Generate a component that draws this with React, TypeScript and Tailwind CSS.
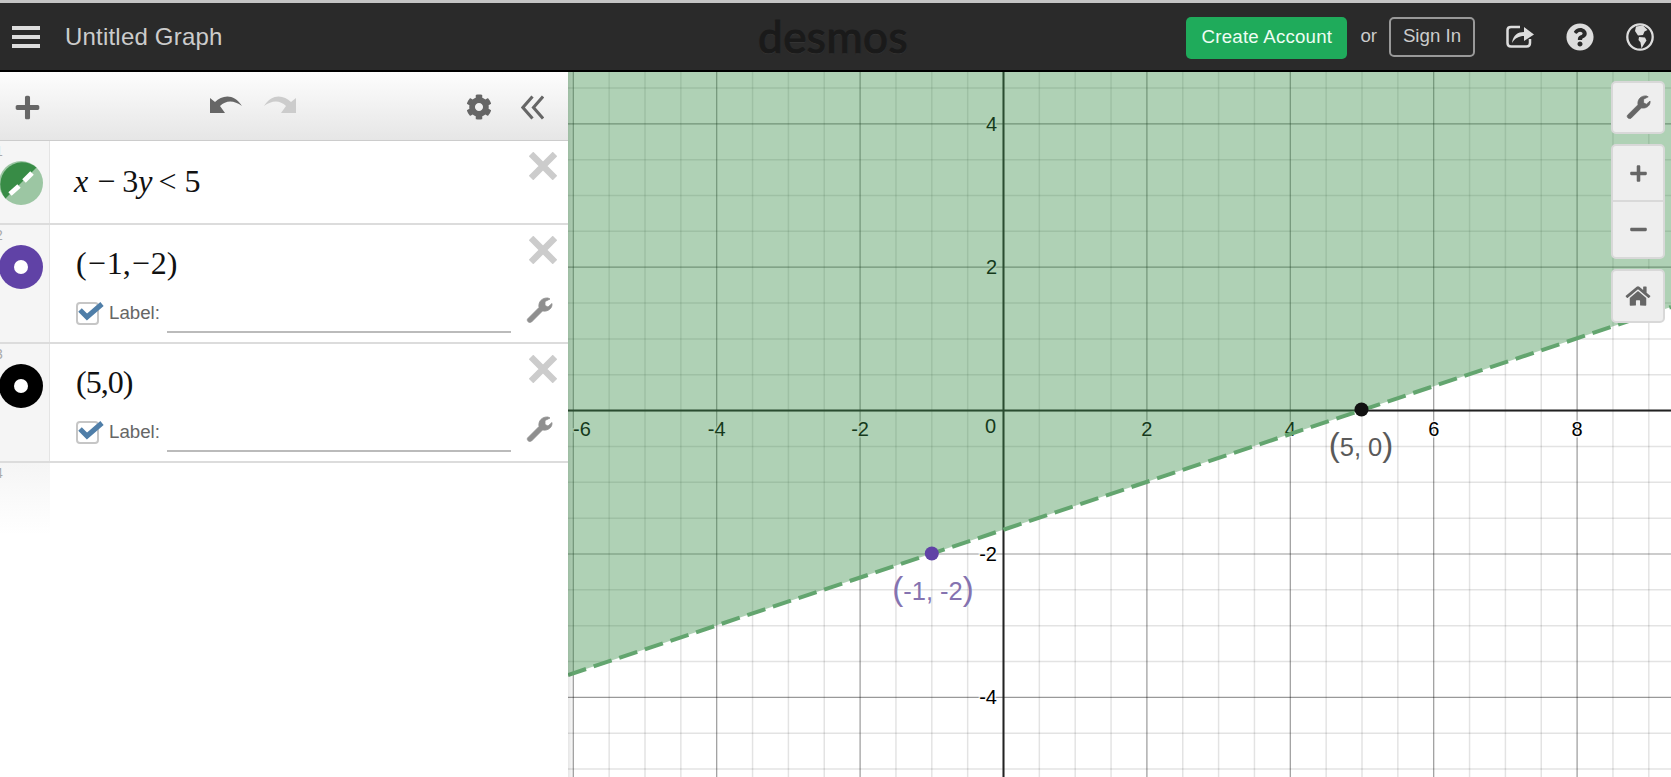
import { FaCog, FaHome, FaMinus, FaPlus, FaQuestionCircle } from "react-icons/fa";

const UNIT = 71.7;
const ORIGIN_X = 1003.5;
const ORIGIN_Y = 410.6;

const toX = (v: number) => ORIGIN_X + v * UNIT;
const toY = (v: number) => ORIGIN_Y - v * UNIT;

const steps: number[] = [];
for (let i = -14; i <= 20; i++) steps.push(i / 2);

const xLabels = [-6, -4, -2, 2, 4, 6, 8];
const yLabels = [4, 2, -2, -4];

function Graph() {
  return (
    <svg viewBox="568 72 1103 705" className="absolute inset-0 w-full h-full">
      {steps.map((v) => (
        <g key={v} stroke="#000" strokeOpacity={v % 2 === 0 ? 0.4 : 0.11} strokeWidth={v % 2 === 0 ? 1.2 : 1.5}>
          <line x1={toX(v)} x2={toX(v)} y1={72} y2={777} />
          <line x1={568} x2={1671} y1={toY(v)} y2={toY(v)} />
        </g>
      ))}
      <line x1={ORIGIN_X} x2={ORIGIN_X} y1={72} y2={777} stroke="#222" strokeWidth={2} />
      <line x1={568} x2={1671} y1={ORIGIN_Y} y2={ORIGIN_Y} stroke="#222" strokeWidth={2} />

      <g fontSize={20} fill="#000" stroke="#fff" strokeWidth={3} strokeOpacity={0.7} style={{ paintOrder: "stroke" }}>
        {xLabels.map((v) => (
          <text key={v} x={v === -6 ? 582 : toX(v)} y={436} textAnchor="middle">
            {v}
          </text>
        ))}
        {yLabels.map((v) => (
          <text key={v} x={997} y={toY(v) + 7} textAnchor="end">
            {v}
          </text>
        ))}
        <text x={996} y={433} textAnchor="end">
          0
        </text>
      </g>

      <polygon points="568,72 1671,72 1671,307 568,675" fill="#388c46" fillOpacity={0.4} />
      <line x1={568} y1={675} x2={1671} y2={307} stroke="#63a56f" strokeWidth={4} strokeDasharray="19 8" />

      <circle cx={931.8} cy={553.5} r={7} fill="#6042a6" />
      <circle cx={1361.5} cy={409.5} r={7} fill="#111" />
      <text x={933} y={600} textAnchor="middle" fontSize={25.5} fill="#8573b0">
        <tspan fontSize={33}>(</tspan>-1, -2<tspan fontSize={33}>)</tspan>
      </text>
      <text x={1361} y={456} textAnchor="middle" fontSize={25.5} fill="#5a5a5a">
        <tspan fontSize={33}>(</tspan>5, 0<tspan fontSize={33}>)</tspan>
      </text>
    </svg>
  );
}

function UndoIcon({ className }: { className?: string }) {
  return (
    <svg viewBox="0 0 32 18" className={className} fill="currentColor">
      <path d="M0 18V3l5 4C12 0 24-2 32 11 24 5 16 5 10 11l5 7Z" />
    </svg>
  );
}

function HideIcon() {
  return (
    <svg viewBox="0 0 24 25" className="w-[23px] h-[25px]" fill="none" stroke="#666" strokeWidth={3.2}>
      <path d="M12 1 2 12.5 12 24M23 1 13 12.5 23 24" />
    </svg>
  );
}

function WrenchIcon({ className }: { className?: string }) {
  return (
    <svg viewBox="0 0 27 27" className={className} fill="currentColor" stroke="currentColor" strokeWidth={0.8}>
      <path
        fillRule="evenodd"
        d="M1.5 22 13 10.5C12 5 16 .5 22 1l2 1-5 2.5v4l3 1.5 4-3.5c.5 4.500-3.500 8.500-9.500 7.500L5.500 25c-2.500 1.500-5-1-4-3Z"
      />
    </svg>
  );
}

function CloseIcon() {
  return (
    <svg viewBox="0 0 28 28" className="w-[28px] h-[28px]" fill="none" stroke="#ccc" strokeWidth={6.5}>
      <path d="M2 2 26 26M26 2 2 26" />
    </svg>
  );
}

function ShareIcon() {
  return (
    <svg viewBox="0 0 28 23" className="w-[28px] h-[23px] ml-[31px]" fill="none" stroke="#ddd" strokeWidth={2.5}>
      <path d="M14 2H5Q1.500 2 1.500 5V18Q1.500 21.500 5 21.500H20.500Q24 21.500 24 18V14" />
      <path d="M6 18C7 10 12 7 18 7V2L28 9.500 18 16V11C13 11 9 13 6 18Z" fill="#ddd" stroke="none" />
    </svg>
  );
}

function GlobeIcon() {
  return (
    <svg viewBox="0 0 28 28" className="w-[28px] h-[28px] ml-[32px]" fill="#ddd">
      <circle cx="14" cy="14" r="12.700" fill="none" stroke="#ddd" strokeWidth={2.300} />
      <path d="M10 3.500 17 2.500 21.500 7 18.500 8.500 17 12 12 12.500 9 8Z" />
      <path d="M13 14 19 14.500 20.500 17.500 17.500 22 15.500 25.500 14.500 19.500 12.500 17Z" />
    </svg>
  );
}

function ShadeIcon() {
  return (
    <svg viewBox="0 0 44 44" className="w-[44px] h-[44px] -ml-[1px] mt-[20px] shrink-0">
      <circle cx="22" cy="22" r="22" fill="#9cc6a3" />
      <path d="M6.500 37.500A22 22 0 0 1 37.500 6.500Z" fill="#388c46" />
      <path d="M11 33 20 25M25 20 33 12" stroke="#fff" strokeWidth={5} />
    </svg>
  );
}

function PointIcon({ color }: { color: string }) {
  return (
    <div
      className="w-[44px] h-[44px] -ml-[1px] mt-[20px] shrink-0 rounded-full flex items-center justify-center"
      style={{ backgroundColor: color }}
    >
      <div className="w-[14px] h-[14px] rounded-full bg-white" />
    </div>
  );
}

function Gutter({ n, children }: { n: number; children?: React.ReactNode }) {
  return (
    <div className="relative w-[50px] shrink-0 bg-[#f5f5f5] border-r border-[#e4e4e4] overflow-hidden">
      <span className="absolute -left-[5px] top-[2px] text-[14px] leading-[16px] text-[#aaa]">{n}</span>
      {children}
    </div>
  );
}

function LabelRow() {
  return (
    <div className="flex items-center mt-[10px]">
      <div className="relative w-[23px] h-[23px] rounded-[4px] border-2 border-[#c6c6c6] bg-white">
        <svg viewBox="0 0 28 20" className="absolute -left-[2px] -top-[2px] w-[28px] h-[20px] overflow-visible" fill="none" stroke="#4f7ea8" strokeWidth={5}>
          <path d="M4 8 11 15 26 2" />
        </svg>
      </div>
      <span className="ml-[10px] w-[58px] text-[18.7px] text-[#666]">Label:</span>
      <input className="w-[344px] h-[40px] border-b-2 border-[#bbb] outline-none bg-transparent" />
    </div>
  );
}

function RowActions({ wrench }: { wrench?: boolean }) {
  return (
    <div className="w-[28px] mr-[11px] mt-[11px] shrink-0 flex flex-col">
      <CloseIcon />
      {wrench && <WrenchIcon className="w-[27px] h-[27px] mt-[33px] -ml-[3px] text-[#8f8f8f]" />}
    </div>
  );
}

const mathFont = "font-['Liberation_Serif',serif] text-[32px] leading-[40px] text-[#111]";

function Minus() {
  return <span className="mx-[1px]">−</span>;
}

function ExpressionList() {
  return (
    <div className="w-[568px] shrink-0 flex flex-col bg-white relative z-10">
      <div className="h-[69px] border-b border-[#ccc] bg-gradient-to-b from-[#fdfdfd] to-[#e6e6e6] flex items-center text-[#666]">
        <FaPlus className="w-[27px] h-[27px] ml-[14px] mt-[2px]" />
        <UndoIcon className="w-[32px] h-[18px] ml-[169px] -mt-[4px]" />
        <UndoIcon className="w-[32px] h-[18px] ml-[22px] -mt-[4px] -scale-x-100 text-[#ccc]" />
        <FaCog className="w-[26px] h-[26px] ml-[170px] mt-[2px]" />
        <div className="ml-[29px] mt-[2px]">
          <HideIcon />
        </div>
      </div>

      <div className="h-[84px] flex border-b-2 border-[#dcdcdc]">
        <Gutter n={1}>
          <ShadeIcon />
        </Gutter>
        <div className={`flex-1 flex items-center pl-[24px] -mt-[2px] ${mathFont}`}>
          <i>x</i>
          <span className="ml-[9px] mr-[7px]">−</span>
          <span>3</span>
          <i>y</i>
          <span className="ml-[6px] mr-[8px]">&lt;</span>
          <span>5</span>
        </div>
        <RowActions />
      </div>

      <div className="h-[119px] flex border-b-2 border-[#dcdcdc]">
        <Gutter n={2}>
          <PointIcon color="#6042a6" />
        </Gutter>
        <div className="flex-1 pl-[26px] pt-[18px]">
          <div className={mathFont}>
            (<Minus />
            1,
            <Minus />
            2)
          </div>
          <LabelRow />
        </div>
        <RowActions wrench />
      </div>

      <div className="h-[119px] flex border-b-2 border-[#dcdcdc]">
        <Gutter n={3}>
          <PointIcon color="#000000" />
        </Gutter>
        <div className="flex-1 pl-[26px] pt-[18px]">
          <div className={`${mathFont} tracking-[-1px]`}>(5,0)</div>
          <LabelRow />
        </div>
        <RowActions wrench />
      </div>

      <div className="h-[72px] flex">
        <div className="relative w-[50px] bg-gradient-to-b from-[#f5f5f5] to-white overflow-hidden">
          <span className="absolute -left-[5px] top-[2px] text-[14px] leading-[16px] text-[#aaa]">4</span>
        </div>
      </div>
    </div>
  );
}

function GraphControls() {
  const box = "w-[54px] bg-[#eeeeee] border-2 border-[#d8d8d8] rounded-[5px] flex items-center justify-center text-[#666]";
  return (
    <div className="absolute top-[9px] right-[6px] flex flex-col gap-[10px]">
      <div className={`${box} h-[53px]`}>
        <WrenchIcon className="w-[25px] h-[25px]" />
      </div>
      <div className={`${box} h-[115px] flex-col`}>
        <div className="h-[56px] w-full flex items-center justify-center border-b-2 border-[#d9d9d9]">
          <FaPlus className="w-[19px] h-[19px]" />
        </div>
        <div className="flex-1 w-full flex items-center justify-center">
          <FaMinus className="w-[19px] h-[19px]" />
        </div>
      </div>
      <div className={`${box} h-[54px]`}>
        <FaHome className="w-[26px] h-[22px]" />
      </div>
    </div>
  );
}

export default function App() {
  return (
    <div className="h-[777px] w-full overflow-hidden flex flex-col font-['Liberation_Sans',Arial,sans-serif]">
      <div className="h-[3px] bg-[#c4c4c4]" />
      <div className="h-[69px] shrink-0 bg-[#2a2a2a] border-b-2 border-black flex items-center text-[#ccc]">
        <div className="w-[758px] flex items-center shrink-0">
          <div className="ml-[12px] w-[28px] flex flex-col gap-[5px]">
            <div className="h-[4px] bg-[#ddd]" />
            <div className="h-[4px] bg-[#ddd]" />
            <div className="h-[4px] bg-[#ddd]" />
          </div>
          <span className="ml-[25px] text-[24px] tracking-[0.2px]">Untitled Graph</span>
        </div>
        <span className="font-['Lato',sans-serif] text-[44px] leading-[44px] -mt-[1px] tracking-[0.5px] text-[#1a1a1a] [-webkit-text-stroke:1.2px_#1a1a1a] [text-shadow:0_1px_1px_#3d3d3d]">
          desmos
        </span>
        <div className="ml-auto flex items-center pr-[17px]">
          <button className="w-[161px] h-[42px] mt-[2px] rounded-[5px] bg-[#1fab5b] text-[18.7px] tracking-[0.2px] text-[#eefdf3]">
            Create Account
          </button>
          <span className="ml-[13px] text-[18.7px]">or</span>
          <button className="ml-[12px] w-[86px] h-[40px] rounded-[5px] border-2 border-[#999] text-[18.7px]">
            Sign In
          </button>
          <ShareIcon />
          <FaQuestionCircle className="ml-[32px] w-[28px] h-[28px] text-[#ddd]" />
          <GlobeIcon />
        </div>
      </div>

      <div className="flex-1 flex min-h-0">
        <ExpressionList />
        <div className="relative flex-1">
          <Graph />
          <div className="absolute left-0 top-0 bottom-0 w-[6px] bg-gradient-to-r from-black/10 to-transparent" />
          <GraphControls />
        </div>
      </div>
    </div>
  );
}
